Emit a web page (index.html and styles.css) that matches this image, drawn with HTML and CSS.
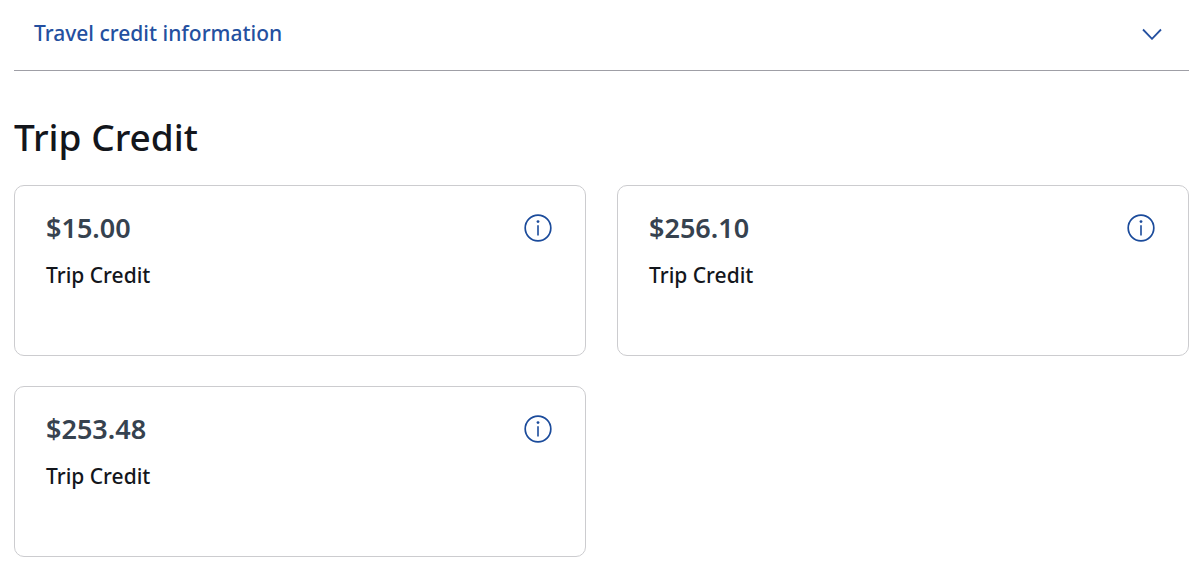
FILE: index.html
```html
<!DOCTYPE html>
<html lang="en">
<head>
<meta charset="utf-8">
<meta name="viewport" content="width=device-width, initial-scale=1">
<title>Trip Credit</title>
<link rel="stylesheet" href="styles.css">
</head>
<body>
<svg class="sprite" aria-hidden="true">
  <symbol id="info" viewBox="0 0 28 28">
    <circle cx="14" cy="14" r="12.8" fill="none" stroke="currentColor" stroke-width="1.7"/>
    <circle cx="14" cy="7.6" r="1.4" fill="currentColor"/>
    <path d="M14 11.2V21.4" fill="none" stroke="currentColor" stroke-width="1.6"/>
  </symbol>
</svg>
<main class="page">
  <button class="disclosure" type="button" aria-expanded="false">
    <span>Travel credit information</span>
    <svg class="chevron" viewBox="0 0 20 12" aria-hidden="true"><path d="M1 1.5L10 10.8L19 1.5" fill="none" stroke="currentColor" stroke-width="1.8"/></svg>
  </button>
  <h1 class="title">Trip Credit</h1>
  <ul class="credits">
    <li class="card">
      <div class="card-head"><h2 class="amount">$15.00</h2><button class="info" type="button" aria-label="Details for $15.00 credit"><svg class="info-icon"><use href="#info"/></svg></button></div>
      <p class="kind">Trip Credit</p>
    </li>
    <li class="card">
      <div class="card-head"><h2 class="amount">$256.10</h2><button class="info" type="button" aria-label="Details for $256.10 credit"><svg class="info-icon"><use href="#info"/></svg></button></div>
      <p class="kind">Trip Credit</p>
    </li>
    <li class="card">
      <div class="card-head"><h2 class="amount">$253.48</h2><button class="info" type="button" aria-label="Details for $253.48 credit"><svg class="info-icon"><use href="#info"/></svg></button></div>
      <p class="kind">Trip Credit</p>
    </li>
  </ul>
</main>
</body>
</html>
```
FILE: styles.css
```css
* {
  box-sizing: border-box;
}

body {
  margin: 0;
  background: #fff;
  color: #13161c;
  font-family: "Noto Sans", "Open Sans", sans-serif;
}

.sprite {
  position: absolute;
  width: 0;
  height: 0;
}

.page {
  padding: 0 11px 12px 14px;
}

.disclosure {
  display: flex;
  align-items: center;
  justify-content: space-between;
  width: 100%;
  padding: 18px 27px 21px 20px;
  border: 0;
  border-bottom: 1px solid #9f9fa6;
  background: none;
  color: #2450a0;
  font: 500 21px/31px "Noto Sans", "Open Sans", sans-serif;
  cursor: pointer;
}

.chevron {
  width: 20px;
  height: 12px;
}

.title {
  margin: 41px 0 23px;
  font-size: 37px;
  line-height: 50px;
  font-weight: 500;
}

.credits {
  display: grid;
  grid-template-columns: repeat(2, 1fr);
  gap: 30px 31px;
  margin: 0;
  padding: 0;
  list-style: none;
}

.card {
  min-height: 171px;
  padding: 24px 33px 24px 31px;
  border: 1px solid #cccccf;
  border-radius: 10px;
}

.card-head {
  display: flex;
  align-items: center;
  justify-content: space-between;
}

.amount {
  margin: 0;
  color: #36424f;
  font-size: 27px;
  line-height: 36px;
  font-weight: 600;
}

.info {
  display: flex;
  padding: 0;
  border: 0;
  background: none;
  color: #1b4b9b;
  cursor: pointer;
}

.info-icon {
  width: 28px;
  height: 28px;
}

.kind {
  margin: 14px 0 0;
  font-size: 21px;
  line-height: 30px;
  font-weight: 500;
}
```
